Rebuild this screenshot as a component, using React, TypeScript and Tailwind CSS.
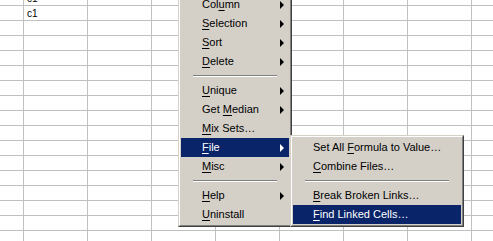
import React from 'react';

type Item = { label: string; key: number; arrow?: boolean; active?: boolean } | 'sep';

const mainItems: Item[] = [
  { label: 'Column', key: 3, arrow: true },
  { label: 'Selection', key: 0, arrow: true },
  { label: 'Sort', key: 0, arrow: true },
  { label: 'Delete', key: 0, arrow: true },
  'sep',
  { label: 'Unique', key: 0, arrow: true },
  { label: 'Get Median', key: 4, arrow: true },
  { label: 'Mix Sets…', key: 0 },
  { label: 'File', key: 0, arrow: true, active: true },
  { label: 'Misc', key: 0, arrow: true },
  'sep',
  { label: 'Help', key: 0, arrow: true },
  { label: 'Uninstall', key: 0 },
];

const fileItems: Item[] = [
  { label: 'Set All Formula to Value…', key: 8 },
  { label: 'Combine Files…', key: 0 },
  'sep',
  { label: 'Break Broken Links…', key: 0 },
  { label: 'Find Linked Cells…', key: 0, active: true },
];

const Label = ({ text, k }: { text: string; k: number }) => (
  <span className="whitespace-nowrap">
    {text.slice(0, k)}
    <span className="underline underline-offset-[2px]">{text[k]}</span>
    {text.slice(k + 1)}
  </span>
);

const Menu = ({ items, pad, className }: { items: Item[]; pad: string; className: string }) => (
  <div
    className={
      'absolute bg-[#d4d0c8] border border-t-[#d4d0c8] border-l-[#d4d0c8] border-r-[#404040] border-b-[#404040] ' +
      className
    }
  >
    <div className="border border-t-white border-l-white border-r-[#808080] border-b-[#808080] p-[1px]">
      {items.map((it, i) =>
        it === 'sep' ? (
          <div key={i} className="h-[10px] pt-[4px] px-[12px]">
            <div className="h-[1px] bg-[#808080]" />
            <div className="h-[1px] bg-white" />
          </div>
        ) : (
          <div
            key={i}
            className={
              'h-[19px] flex items-center justify-between pr-[5px] ' +
              pad +
              (it.active ? ' bg-[#0a246a] text-white' : ' text-black')
            }
          >
            <Label text={it.label} k={it.key} />
            {it.arrow && (
              <span
                className={
                  'w-0 h-0 border-y-[4px] border-y-transparent border-l-[4px] ' +
                  (it.active ? 'border-l-white' : 'border-l-black')
                }
              />
            )}
          </div>
        )
      )}
    </div>
  </div>
);

const App = () => {
  const rows = Array.from({ length: 17 });
  const cols = Array.from({ length: 8 });

  return (
    <div className="relative w-[493px] h-[241px] overflow-hidden bg-white font-['Liberation_Sans',Arial,sans-serif]">
      <div className="-mt-[9px]">
        {rows.map((_, r) => (
          <div key={r} className="flex">
            <div className="w-[24px] h-[15px] shrink-0 border-r border-b border-[#c0c0c0]" />
            {cols.map((_, c) => (
              <div
                key={c}
                className="w-[64px] h-[15px] shrink-0 border-r border-b border-[#c0c0c0] pl-[3px] text-[10px] leading-[15px] text-black"
              >
                {c === 0 && r < 2 ? 'c1' : ''}
              </div>
            ))}
          </div>
        ))}
      </div>

      <div className="text-[11px]">
        <Menu items={mainItems} pad="pl-[21px]" className="left-[178px] top-[-8px] w-[114px]" />
        <Menu items={fileItems} pad="pl-[20px]" className="left-[290px] top-[135px] w-[174px]" />
      </div>
    </div>
  );
};

export default App;
